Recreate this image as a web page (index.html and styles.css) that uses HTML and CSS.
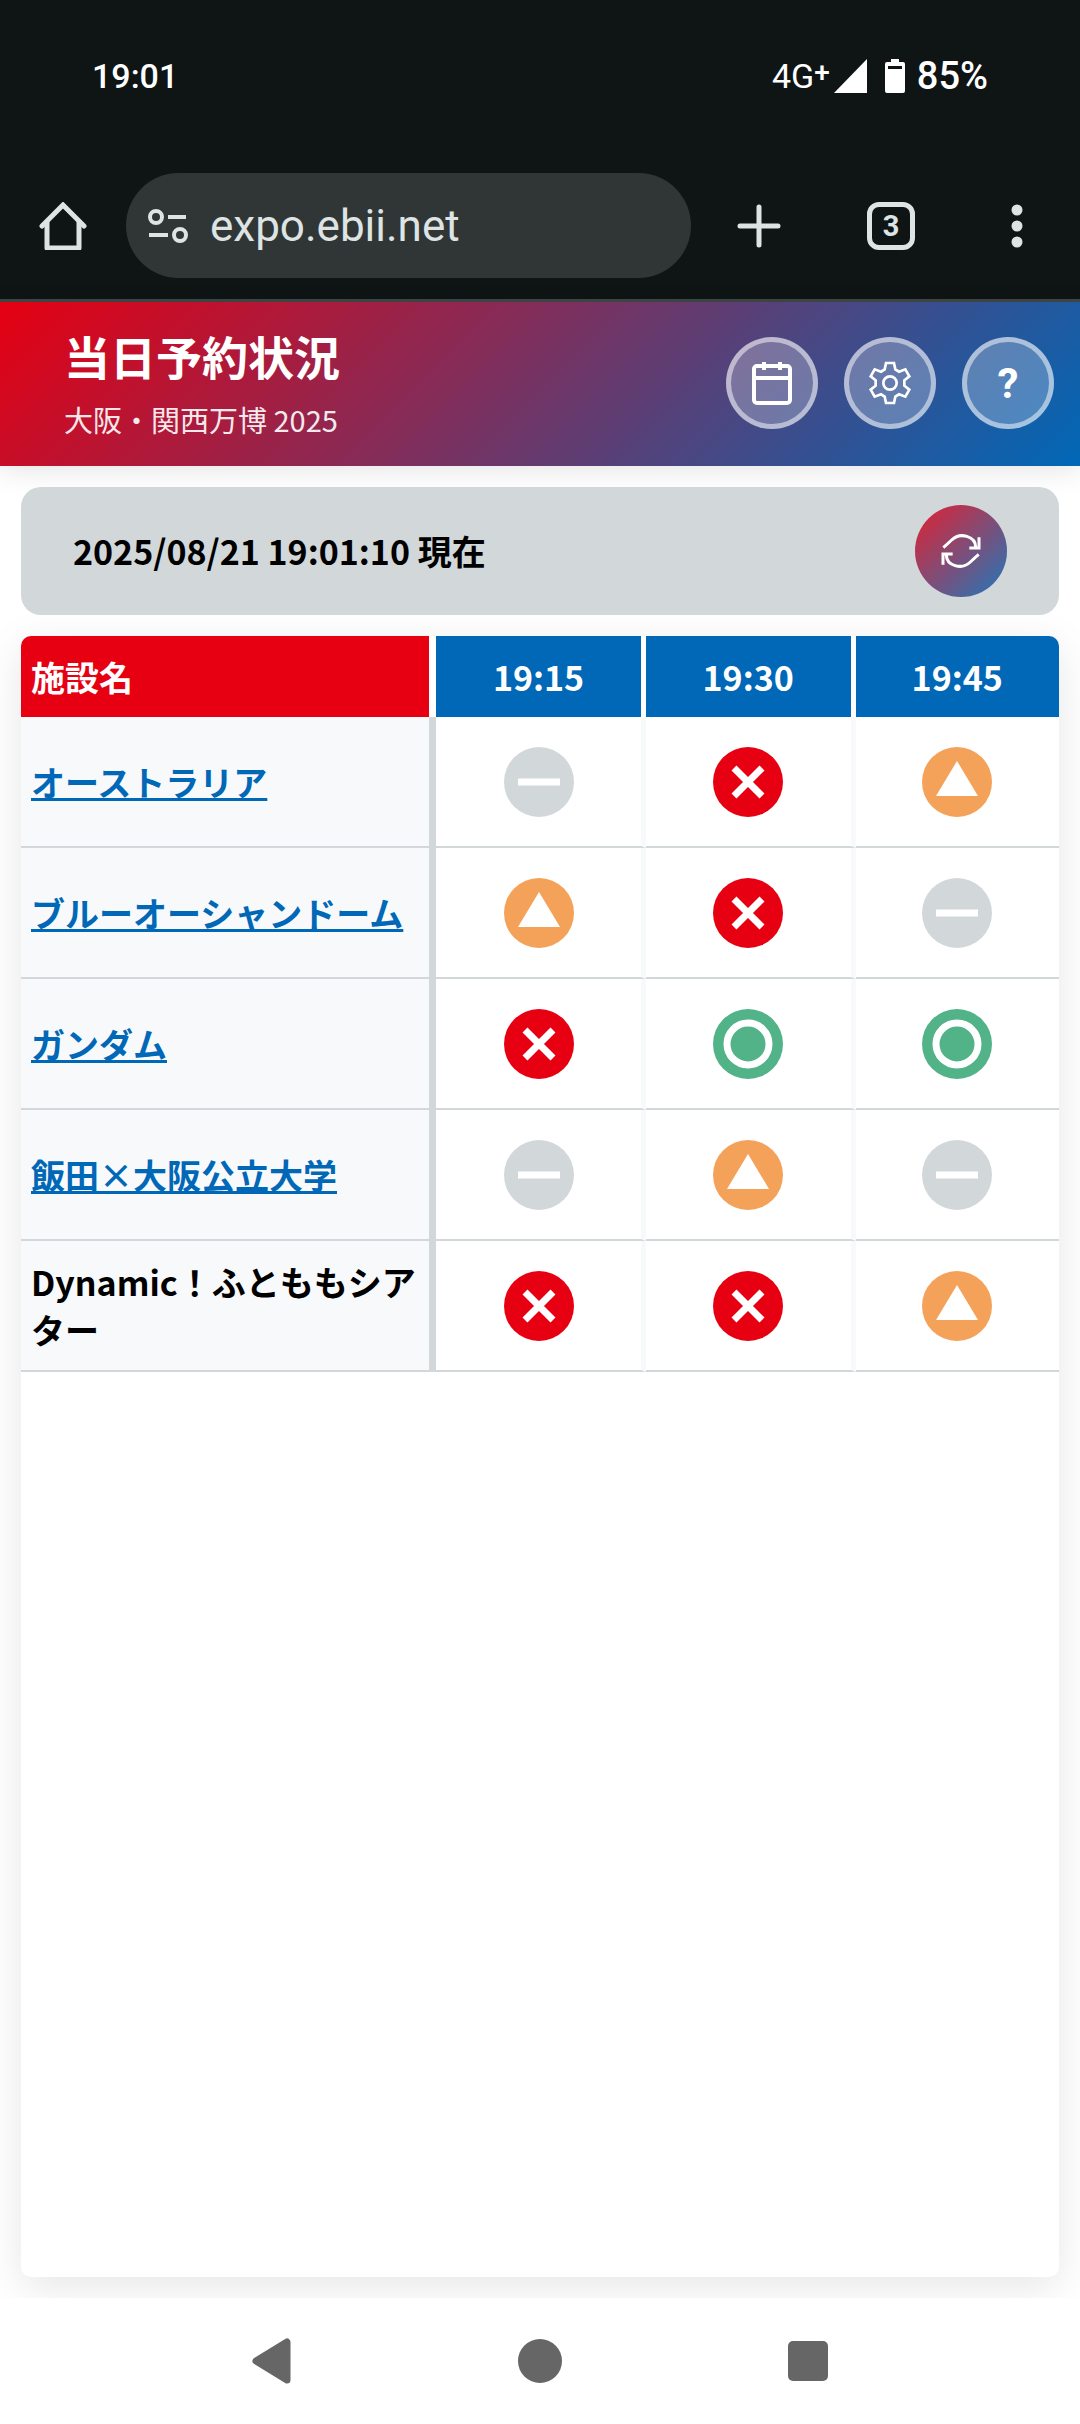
FILE: index.html
```html
<!DOCTYPE html>
<html lang="ja">
<head>
    <meta charset="UTF-8">
    <meta name="viewport" content="width=device-width, initial-scale=1.0">
    <title>当日予約状況</title>
    <link rel="stylesheet" href="styles.css">
</head>
<body>
    <!-- shared status marks -->
    <svg width="0" height="0" class="defs" aria-hidden="true">
        <symbol id="none" viewBox="-10 -10 20 20">
            <circle r="10" fill="#d2d7d9"/>
            <path d="M-6 0H6" stroke="#fff" stroke-width="2"/>
        </symbol>
        <symbol id="full" viewBox="-10 -10 20 20">
            <circle r="10" fill="#e60012"/>
            <path d="M-4-4L4 4M4-4L-4 4" stroke="#fff" stroke-width="2"/>
        </symbol>
        <symbol id="few" viewBox="-10 -10 20 20">
            <circle r="10" fill="#f4a259"/>
            <path d="M0-6L6 4H-6Z" fill="#fff"/>
        </symbol>
        <symbol id="open" viewBox="-10 -10 20 20">
            <circle r="10" fill="#52b288"/>
            <circle r="6" fill="none" stroke="#fff" stroke-width="2"/>
        </symbol>
    </svg>

    <div class="phone-top">
        <div class="status-bar">
            <span class="clock">19:01</span>
            <div class="status-icons">
                <span class="network">4G<sup>+</sup></span>
                <svg class="signal" width="33" height="34" viewBox="0 0 33 34"><path d="M33 0V34H0Z" fill="#fff"/></svg>
                <svg width="20" height="34" viewBox="0 0 20 34">
                    <path fill="#fff" fill-rule="evenodd" d="M6 0h8v3h4a2 2 0 0 1 2 2v27a2 2 0 0 1-2 2H2a2 2 0 0 1-2-2V5a2 2 0 0 1 2-2h4zM3 7v3h14V7z"/>
                </svg>
                <span class="battery">85%</span>
            </div>
        </div>
        <div class="browser-bar">
            <button class="bar-button" aria-label="Home">
                <svg width="48" height="48" viewBox="0 0 48 48" fill="none" stroke="#dee3e3" stroke-width="5" stroke-linejoin="round" stroke-linecap="round">
                    <path d="M3 24L24 3l21 21" stroke-linejoin="miter"/>
                    <path d="M8 20v26h32V20"/>
                </svg>
            </button>
            <div class="address">
                <svg width="40" height="36" viewBox="0 0 40 36" fill="none" stroke="#dee3e3" stroke-width="4">
                    <circle cx="8" cy="9" r="6"/>
                    <path d="M20 9h18M1 27h19"/>
                    <circle cx="32" cy="27" r="6"/>
                </svg>
                <input type="text" value="expo.ebii.net" aria-label="Address">
            </div>
            <div class="bar-actions">
                <button class="bar-button" aria-label="New tab">
                    <svg width="48" height="48" viewBox="0 0 48 48"><path d="M24 5v38M5 24h38" stroke="#dee3e3" stroke-width="5" stroke-linecap="round"/></svg>
                </button>
                <button class="bar-button tabs">3</button>
                <button class="menu-button" aria-label="Menu">
                    <svg width="36" height="48" viewBox="0 0 36 48" fill="#dee3e3">
                        <circle cx="18" cy="8" r="5.5"/>
                        <circle cx="18" cy="24" r="5.5"/>
                        <circle cx="18" cy="40" r="5.5"/>
                    </svg>
                </button>
            </div>
        </div>
    </div>

    <header class="header">
        <div>
            <h1>当日予約状況</h1>
            <p>大阪・関西万博 2025</p>
        </div>
        <div class="header-buttons">
            <button class="round-button" aria-label="日付">
                <svg width="44" height="44" viewBox="0 0 44 44" fill="none" stroke="#fff" stroke-width="4">
                    <rect x="4" y="5" width="36" height="37" rx="3"/>
                    <path d="M4 17h36M14 1v8M30 1v8"/>
                </svg>
            </button>
            <button class="round-button" aria-label="設定">
                <svg width="44" height="44" viewBox="-66 -66 132 132" fill="none" stroke="#fff" stroke-width="8">
                    <path d="M-12-60H12L16-41 27-34 46-41 58-20 43-8V8L58 20 46 41 27 34 16 41 12 60H-12L-16 41-27 34-46 41-58 20-43 8V-8L-58-20-46-41-27-34-16-41Z"/>
                    <circle r="20"/>
                </svg>
            </button>
            <button class="round-button">?</button>
        </div>
    </header>

    <main>
        <div class="update-bar">
            <span>2025/08/21 19:01:10 現在</span>
            <button class="refresh" aria-label="更新">
                <svg width="40" height="40" viewBox="-60 -60 120 120" fill="none" stroke="#fff" stroke-width="9">
                    <path d="M-53-10L-28-33C-2-58 44-44 44-11M25-9H54V-41"/>
                    <path d="M53 10L28 33C2 58-44 44-44 11M-25 9H-54V41"/>
                </svg>
            </button>
        </div>

        <div class="table-card">
            <table>
                <thead>
                    <tr><th class="name">施設名</th><th class="time">19:15</th><th class="time">19:30</th><th>19:45</th></tr>
                </thead>
                <tbody>
                    <tr>
                        <td class="name"><a href="#">オーストラリア</a></td>
                        <td><svg class="mark"><use href="#none"/></svg></td>
                        <td><svg class="mark"><use href="#full"/></svg></td>
                        <td><svg class="mark"><use href="#few"/></svg></td>
                    </tr>
                    <tr>
                        <td class="name"><a href="#">ブルーオーシャンドーム</a></td>
                        <td><svg class="mark"><use href="#few"/></svg></td>
                        <td><svg class="mark"><use href="#full"/></svg></td>
                        <td><svg class="mark"><use href="#none"/></svg></td>
                    </tr>
                    <tr>
                        <td class="name"><a href="#">ガンダム</a></td>
                        <td><svg class="mark"><use href="#full"/></svg></td>
                        <td><svg class="mark"><use href="#open"/></svg></td>
                        <td><svg class="mark"><use href="#open"/></svg></td>
                    </tr>
                    <tr>
                        <td class="name"><a href="#">飯田×大阪公立大学</a></td>
                        <td><svg class="mark"><use href="#none"/></svg></td>
                        <td><svg class="mark"><use href="#few"/></svg></td>
                        <td><svg class="mark"><use href="#none"/></svg></td>
                    </tr>
                    <tr>
                        <td class="name">Dynamic！ふとももシアター</td>
                        <td><svg class="mark"><use href="#full"/></svg></td>
                        <td><svg class="mark"><use href="#full"/></svg></td>
                        <td><svg class="mark"><use href="#few"/></svg></td>
                    </tr>
                </tbody>
            </table>
        </div>
    </main>

    <nav class="phone-nav">
        <button class="nav-button" aria-label="Back">
            <svg width="46" height="46" viewBox="0 0 46 46"><path d="M7 23L38 4V42Z" fill="#666" stroke="#666" stroke-width="7" stroke-linejoin="round"/></svg>
        </button>
        <button class="nav-button" aria-label="Home">
            <svg width="46" height="46" viewBox="0 0 46 46"><circle cx="23" cy="23" r="22" fill="#666"/></svg>
        </button>
        <button class="nav-button" aria-label="Recent apps">
            <svg width="46" height="46" viewBox="0 0 46 46"><rect x="3" y="3" width="40" height="40" rx="5" fill="#666"/></svg>
        </button>
    </nav>
</body>
</html>
```

FILE: styles.css
```css
* {
    box-sizing: border-box;
}
body {
    margin: 0;
    min-height: 100vh;
    display: flex;
    flex-direction: column;
    background-color: #fff;
    color: #000;
    font-family: "Noto Sans CJK JP", sans-serif;
    font-size: 34px;
    line-height: 48px;
}
button {
    border: none;
    padding: 0;
    background: none;
    color: #fff;
    cursor: pointer;
}
svg {
    display: block;
}
.defs {
    position: absolute;
}

/* status bar and address bar */
.phone-top {
    background-color: #0f1515;
    border-bottom: 3px solid #3f4746;
    font-family: Roboto, sans-serif;
    color: #fff;
}
.status-bar {
    height: 152px;
    padding: 0 92px;
    display: flex;
    align-items: center;
    justify-content: space-between;
    font-weight: 500;
}
.status-icons {
    display: flex;
    align-items: center;
}
.network {
    font-weight: 400;
}
.network sup {
    font-size: 28px;
    line-height: 0;
    font-weight: 500;
    vertical-align: 6px;
}
.signal {
    margin: 0 18px 0 4px;
}
.battery {
    margin-left: 12px;
    font-size: 38px;
}
.browser-bar {
    height: 147px;
    padding: 0 45px 0 39px;
    display: flex;
    align-items: center;
}
.address {
    flex: 1;
    min-width: 0;
    height: 105px;
    margin-left: 39px;
    padding: 0 22px;
    border-radius: 53px;
    background-color: #303636;
    display: flex;
    align-items: center;
    gap: 22px;
}
.address svg {
    flex: none;
}
.address input {
    flex: 1;
    min-width: 0;
    padding: 0;
    border: none;
    background: none;
    color: #dee3e3;
    font-family: Roboto, sans-serif;
    font-size: 44px;
}
.bar-actions {
    display: flex;
    gap: 84px;
    margin-left: 44px;
}
.bar-button {
    width: 48px;
    height: 48px;
}
.tabs {
    border: 5px solid #dee3e3;
    border-radius: 12px;
    color: #dee3e3;
    font-family: Roboto, sans-serif;
    font-size: 29px;
    font-weight: 700;
}

/* page header */
.header {
    position: relative;
    height: 164px;
    padding: 0 26px 2px 64px;
    display: flex;
    align-items: center;
    justify-content: space-between;
    color: #fff;
    background: linear-gradient(135deg, #e60012, #0068b7);
    box-shadow: 0 5px 26px rgba(0, 0, 0, 0.1);
}
.header h1 {
    margin: 0;
    font-size: 46px;
    line-height: 64px;
    font-weight: 700;
}
.header p {
    margin: 8px 0 0;
    font-size: 29px;
    line-height: 48px;
    opacity: 0.9;
}
.header-buttons {
    display: flex;
    gap: 26px;
}
.round-button {
    width: 92px;
    height: 92px;
    display: flex;
    align-items: center;
    justify-content: center;
    border: 5px solid rgba(255, 255, 255, 0.5);
    border-radius: 50%;
    background-color: rgba(255, 255, 255, 0.25);
    font-family: Roboto, sans-serif;
    font-size: 42px;
    font-weight: 700;
}

main {
    flex: 1;
    padding: 21px;
    display: flex;
    flex-direction: column;
    gap: 21px;
    overflow: hidden;
}
.update-bar {
    position: relative;
    z-index: 1;
    height: 128px;
    padding: 0 52px;
    display: flex;
    align-items: center;
    justify-content: space-between;
    border-radius: 20px;
    background-color: #d2d7d9;
    font-weight: 600;
}
.refresh {
    width: 92px;
    height: 92px;
    display: flex;
    align-items: center;
    justify-content: center;
    border-radius: 50%;
    background: linear-gradient(135deg, rgba(230, 0, 18, 0.85), rgba(0, 104, 183, 0.85));
}

/* reservation table */
.table-card {
    flex: 1;
    border-radius: 10px;
    overflow: hidden;
    background-color: #fff;
    box-shadow: 0 10px 42px rgba(0, 0, 0, 0.1);
}
table {
    width: 100%;
    table-layout: fixed;
    border-collapse: separate;
    border-spacing: 0;
}
th {
    height: 81px;
    padding: 0;
    background-color: #0068b7;
    color: #fff;
    font-weight: 700;
    border-right: 5px solid #fff;
}
td {
    height: 131px;
    padding: 0;
    border-right: 5px solid #f8f9fb;
    border-bottom: 2px solid #d2d7d9;
}
th:last-child,
td:last-child {
    border-right: none;
}
.name {
    width: 40%;
    padding: 0 10px;
    text-align: left;
}
.time {
    width: 20.2%;
}
th.name {
    background-color: #e60012;
    border-right: 7px solid #fff;
}
td.name {
    background-color: #f8f9fb;
    border-right: 7px solid #d2d7d9;
    font-weight: 600;
}
td a {
    color: #0068b7;
    text-decoration-thickness: 3px;
}
.mark {
    width: 70px;
    height: 70px;
    margin: 0 auto;
}

/* system navigation */
.phone-nav {
    position: relative;
    height: 126px;
    display: flex;
    align-items: center;
    justify-content: center;
    gap: 222px;
    background-color: #fff;
}
.nav-button {
    width: 46px;
    height: 46px;
}
```
